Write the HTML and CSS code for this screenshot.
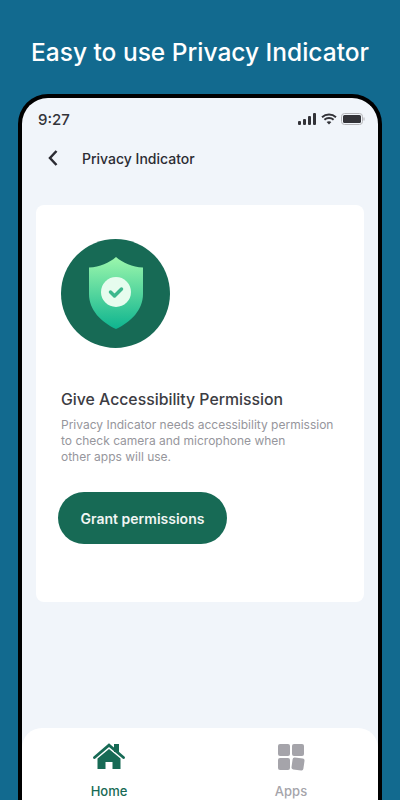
FILE: index.html
```html
<!DOCTYPE html>
<html lang="en">

<head>
    <meta charset="UTF-8">
    <meta name="viewport" content="width=device-width, initial-scale=1.0">
    <title>Privacy Indicator</title>
    <link rel="stylesheet" href="styles.css">
</head>

<body>
    <h1 class="headline">Easy to use Privacy Indicator</h1>

    <div class="phone">
        <div class="status-bar">
            <span class="clock">9:27</span>
            <div class="status-icons">
                <svg width="18" height="12" viewBox="0 0 18 12">
                    <rect x="0" y="8" width="3" height="4" rx="1" fill="#333338"/>
                    <rect x="5" y="6" width="3" height="6" rx="1" fill="#333338"/>
                    <rect x="10" y="3" width="3" height="9" rx="1" fill="#333338"/>
                    <rect x="15" y="0" width="3" height="12" rx="1" fill="#333338"/>
                </svg>
                <svg width="16" height="12" viewBox="0 0 16 12">
                    <path d="M1 4.200C5 .6 11 .6 15 4.200M3.400 6.800C6 4.500 10 4.500 12.600 6.800" fill="none" stroke="#333338" stroke-width="2"/>
                    <path d="M5.600 9L8 11.600 10.400 9C9 7.900 7 7.900 5.600 9Z" fill="#333338"/>
                </svg>
                <svg width="24" height="12" viewBox="0 0 24 12">
                    <rect x=".5" y=".5" width="21" height="11" rx="3" fill="none" stroke="#b4b4b8"/>
                    <rect x="2" y="2" width="18" height="8" rx="1.5" fill="#333338"/>
                    <rect x="22.500" y="4.500" width="1" height="3" fill="#b4b4b8"/>
                </svg>
            </div>
        </div>

        <div class="app-bar">
            <svg class="back" width="12" height="16" viewBox="0 0 12 16">
                <path d="M9.500 1L3 8l6.500 7" fill="none" stroke="#2c2c33" stroke-width="2.500"/>
            </svg>
            <span class="app-title">Privacy Indicator</span>
        </div>

        <div class="card">
            <div class="badge">
                <svg width="58" height="74" viewBox="0 1 58 74">
                    <defs>
                        <linearGradient id="shield" x1="0" y1="0" x2="0" y2="1">
                            <stop offset="0" stop-color="#9cf7ac"/>
                            <stop offset="1" stop-color="#0eb48f"/>
                        </linearGradient>
                    </defs>
                    <path d="M29 1C36 7 45 11 56 11.500V38C56 54 44 66 29 73C14 66 2 54 2 38V11.500C13 11 22 7 29 1Z" fill="url(#shield)"/>
                    <circle cx="29" cy="36" r="15" fill="#e6fcee"/>
                    <path d="M23.500 36l4 4 7-7" fill="none" stroke="#3cb88d" stroke-width="3.500" stroke-linecap="round" stroke-linejoin="round"/>
                </svg>
            </div>
            <h2 class="card-title">Give Accessibility Permission</h2>
            <p class="card-text">Privacy Indicator needs accessibility permission<br>to check camera and microphone when<br>other apps will use.</p>
            <button class="grant">Grant permissions</button>
        </div>

        <nav class="tabs">
            <div class="tab tab-active">
                <svg width="32" height="28" viewBox="0 0 32 28">
                    <path d="M21 1h5v8h-5Z" fill="#176a55"/>
                    <path d="M1.500 14.500L16 2.200 30.500 14.500" fill="none" stroke="#176a55" stroke-width="2.800" stroke-linecap="round"/>
                    <path d="M4.500 15.500L16 6l11.500 9.500V26H19.500v-7h-7v7H4.500Z" fill="#176a55"/>
                </svg>
                <span>Home</span>
            </div>
            <div class="tab">
                <svg width="28" height="28" viewBox="0 0 28 28">
                    <rect x="1" y="1" width="12" height="12" rx="2" fill="#a5a4aa"/>
                    <rect x="15" y="1" width="12" height="12" rx="2" fill="#a5a4aa"/>
                    <rect x="1" y="15" width="12" height="12" rx="2" fill="#a5a4aa"/>
                    <rect x="15" y="15" width="12" height="12" rx="2" fill="#a5a4aa" transform="rotate(8 21 21)"/>
                </svg>
                <span>Apps</span>
            </div>
        </nav>
    </div>
</body>

</html>
```

FILE: styles.css
```css
* {
    box-sizing: border-box;
}

html,
body {
    height: 800px;
    overflow: hidden;
}

body {
    margin: 0;
    padding-top: 36px;
    background-color: #126a8f;
    font-family: Inter, "Liberation Sans", sans-serif;
    display: flex;
    flex-direction: column;
    align-items: center;
}

.headline {
    margin: 0;
    font-size: 24.500px;
    line-height: 32px;
    font-weight: 500;
    color: #fff;
    text-align: center;
    white-space: nowrap;
}

.phone {
    margin-top: 26px;
    width: 364px;
    height: 706px;
    flex-shrink: 0;
    display: flex;
    flex-direction: column;
    background-color: #f1f5fa;
    border: 4px solid #000;
    border-bottom: 0;
    border-radius: 30px 30px 0 0;
    overflow: hidden;
}

.status-bar {
    display: flex;
    justify-content: space-between;
    align-items: center;
    height: 20px;
    margin-top: 11px;
    padding: 0 13px 0 16px;
}

.clock {
    font-size: 15px;
    font-weight: 500;
    color: #333338;
}

.status-icons {
    display: flex;
    align-items: center;
    gap: 4.500px;
}

.app-bar {
    display: flex;
    align-items: center;
    height: 24px;
    margin-top: 17px;
    padding-left: 25px;
}

.app-title {
    margin-left: 23px;
    font-size: 14px;
    font-weight: 500;
    color: #2c2c33;
}

.card {
    margin: 35px 14px 0;
    height: 397px;
    flex-shrink: 0;
    padding: 34px 25px 0;
    background-color: #fff;
    border-radius: 8px;
}

.badge {
    width: 109px;
    height: 109px;
    border-radius: 50%;
    background-color: #176a55;
    display: flex;
    align-items: center;
    justify-content: center;
}

.card-title {
    margin: 42px 0 0;
    font-size: 15.800px;
    line-height: 20px;
    font-weight: 500;
    color: #3c3c43;
    white-space: nowrap;
}

.card-text {
    margin: 7px 0 0;
    font-size: 12px;
    line-height: 16px;
    color: #96969c;
    white-space: nowrap;
}

.grant {
    display: block;
    margin: 27px 0 0 -3px;
    width: 169px;
    height: 52px;
    border: 0;
    border-radius: 26px;
    background-color: #176a55;
    color: #f1f5f3;
    font-family: inherit;
    font-size: 14px;
    font-weight: 600;
}

.tabs {
    margin-top: auto;
    height: 72px;
    flex-shrink: 0;
    display: flex;
    justify-content: center;
    padding-top: 15px;
    background-color: #fff;
    border-radius: 20px 20px 0 0;
}

.tab {
    width: 182px;
    flex-shrink: 0;
    display: flex;
    flex-direction: column;
    align-items: center;
    gap: 12px;
    font-size: 13px;
    line-height: 16px;
    font-weight: 500;
    color: #a5a4aa;
}

.tab-active {
    color: #176a55;
}
```
